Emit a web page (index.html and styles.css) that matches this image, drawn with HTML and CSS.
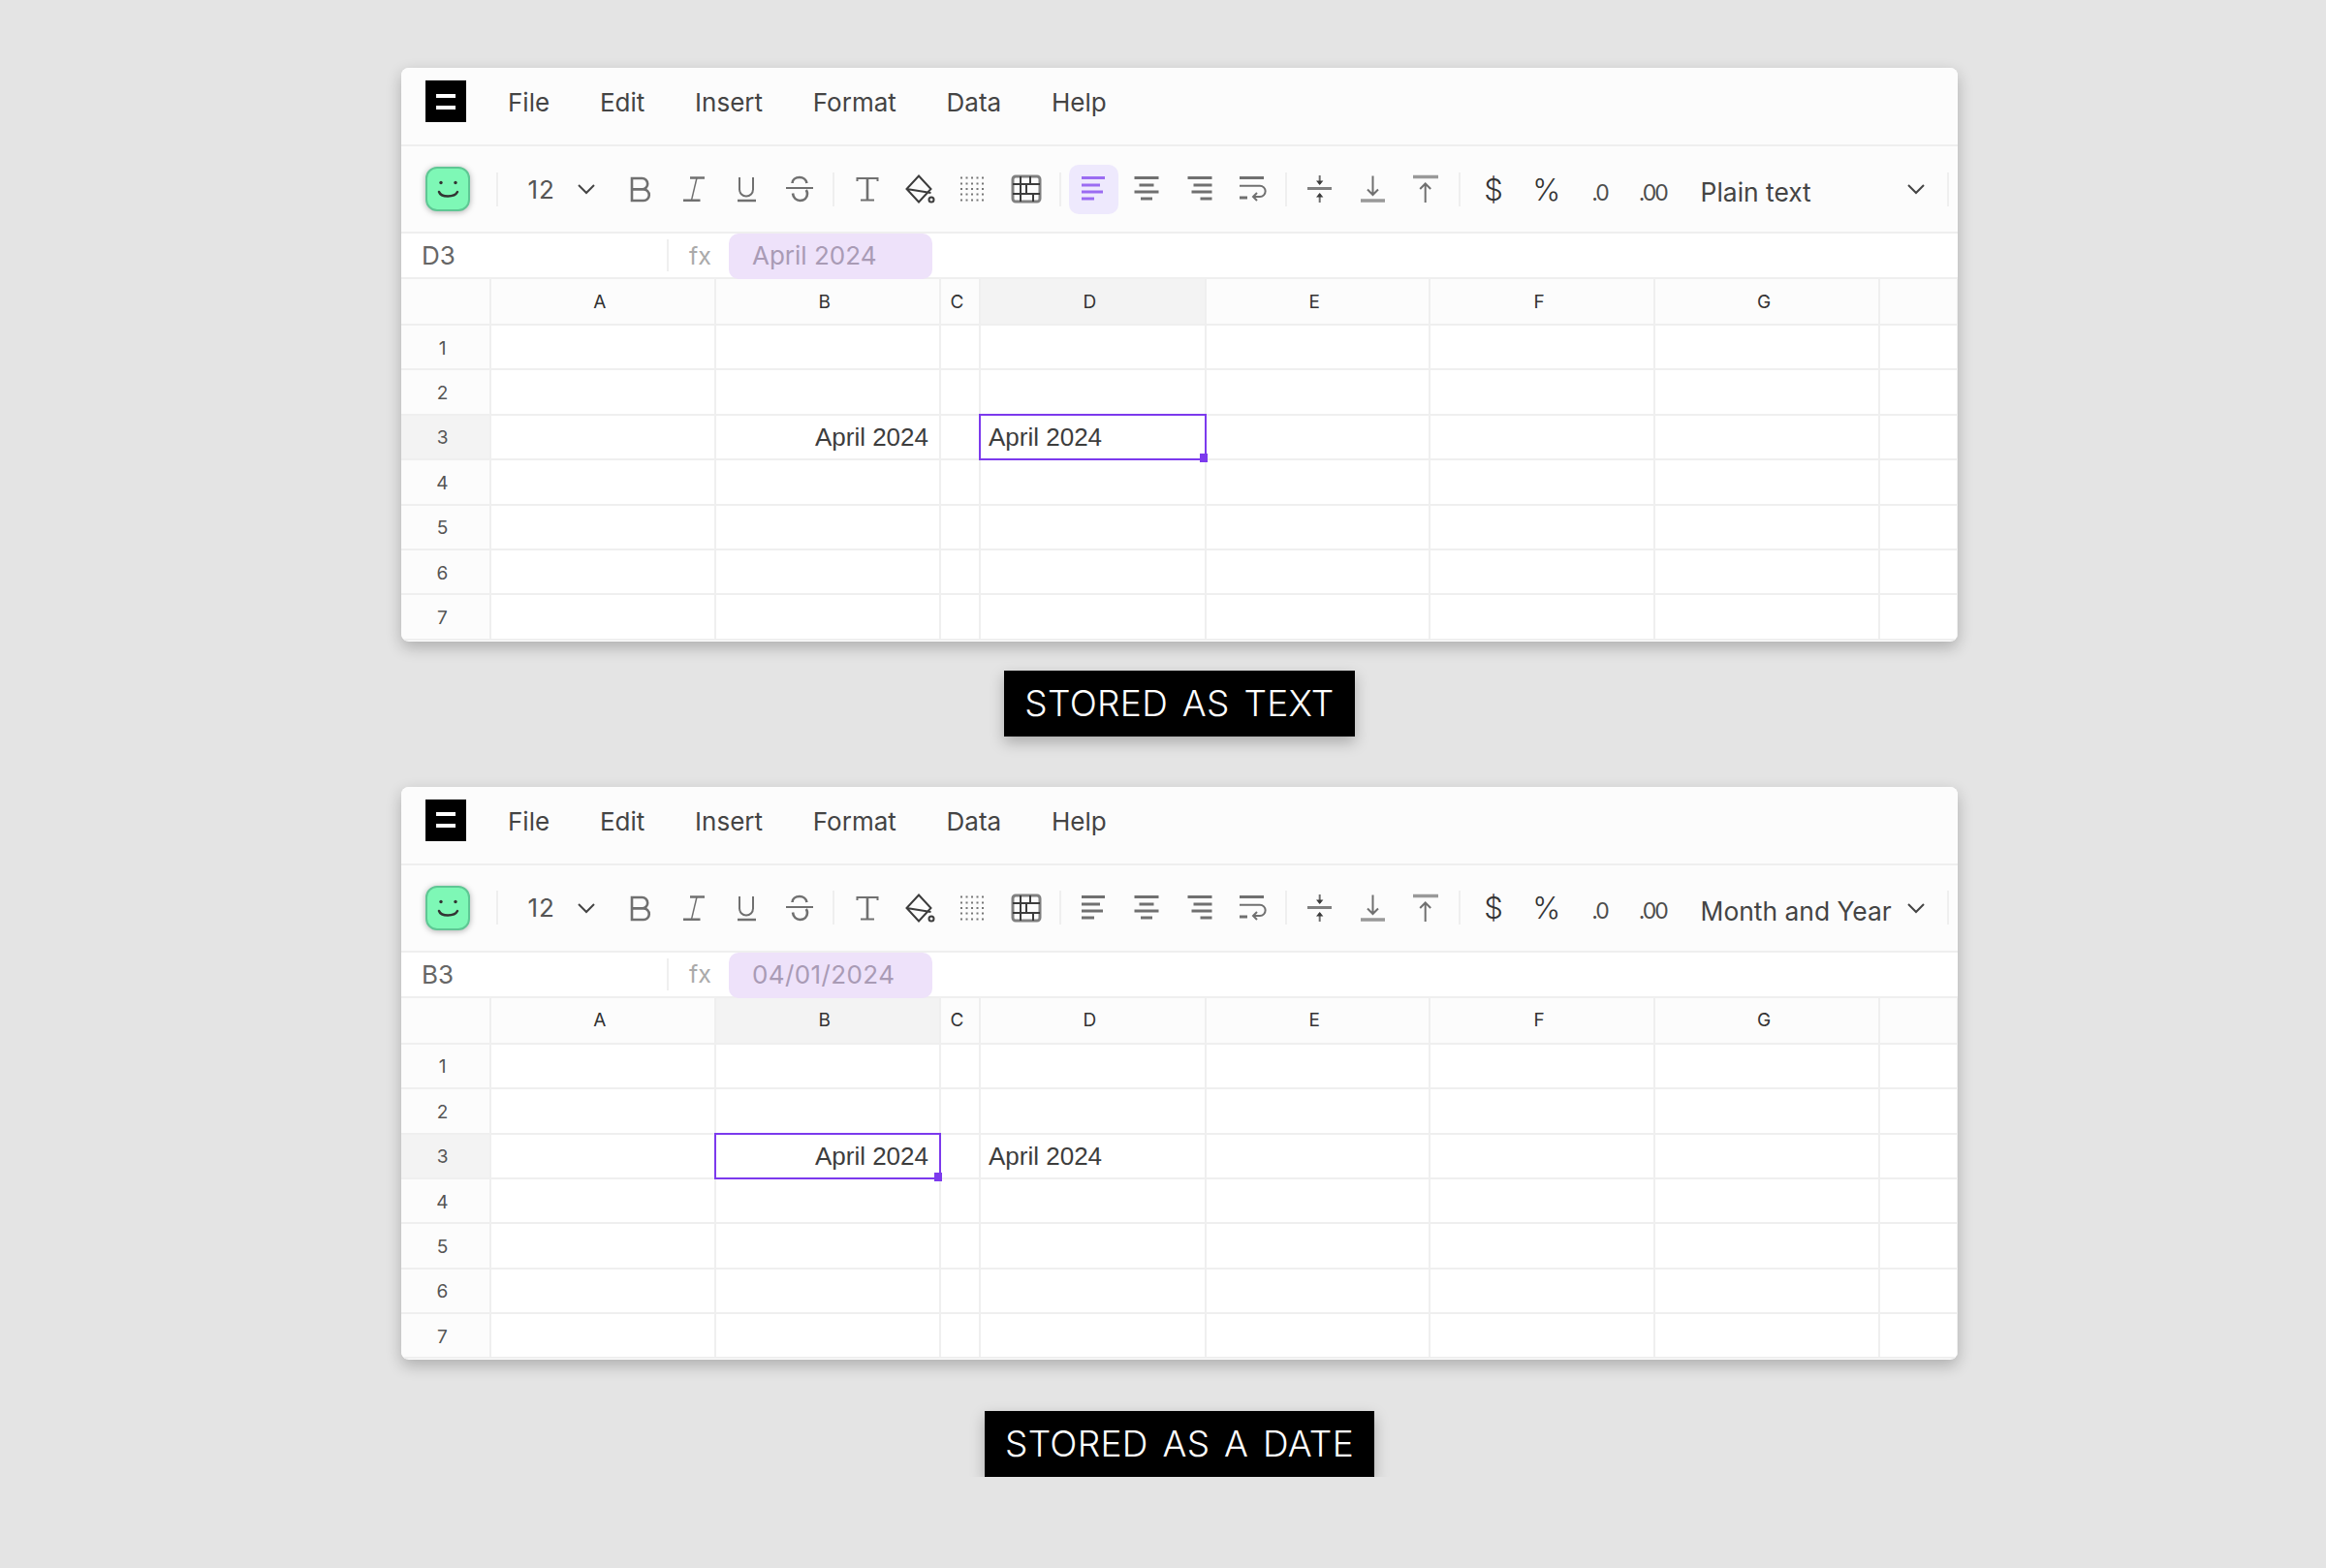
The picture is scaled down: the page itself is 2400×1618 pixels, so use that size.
FILE: index.html
```html
<!DOCTYPE html>
<html lang="en">
<head>
  <meta charset="UTF-8" />
  <title>Stored as text vs stored as a date</title>
  <link rel="stylesheet" href="styles.css">
</head>
<body>
  <svg class="sprite" xmlns="http://www.w3.org/2000/svg">
    <symbol id="i-chevron" viewBox="0 0 20 12"><path d="M2 2l8 8 8-8"/></symbol>
    <symbol id="i-bold" viewBox="0 0 32 32"><path class="thick" d="M7 5h10.500a5.700 5.700 0 0 1 0 11.400H7zM7 16.400h12a5.800 5.800 0 0 1 0 11.600H7z"/></symbol>
    <symbol id="i-italic" viewBox="0 0 32 32"><path class="thick" d="M12 4.500h15M5 27.700h17.500"/><path class="thin" d="M19 4.500l-5.500 23.200"/></symbol>
    <symbol id="i-underline" viewBox="0 0 32 32"><path d="M9 4v12.500a7 7 0 0 0 14 0V4"/><path class="thick" d="M7 28h19"/></symbol>
    <symbol id="i-strike" viewBox="0 0 32 32"><path class="thick" d="M23.500 10c-.5-3.500-3.700-6-7.500-6-4.300 0-7.500 2.500-7.500 6M9 20.500c.5 4.500 3.500 7.500 7.500 7.500 4.300 0 7.500-2.800 7.500-7 0-1.500-.5-2.800-1.200-4"/><path d="M2 15h28"/></symbol>
    <symbol id="i-text" viewBox="0 0 32 32"><path d="M5.500 8V5h21v3M9 27.500h14"/><path class="thick" d="M16 5v22"/></symbol>
    <symbol id="i-bucket" viewBox="0 0 32 32"><path class="dark" d="M15 2.500L27.500 16 15 29.500 2.500 16zM2.500 16l25 4"/><circle class="dark" cx="28" cy="27" r="2.500"/></symbol>
    <symbol id="i-borders" viewBox="0 0 32 32"><path class="dots" d="M3 4.500h26M3 10.500h26M3 16h26M3 21.500h26M3 27.500h26"/></symbol>
    <symbol id="i-grid" viewBox="0 0 32 32"><rect class="heavy" x="2" y="3" width="28" height="26" rx="3"/><path class="dark" d="M2 11h28M2 21h28M10 3v26M20 3v8M16 11v10M23 21v8"/></symbol>
    <symbol id="i-left" viewBox="0 0 32 32"><path class="bars" d="M4 4.500h24M4 12h19M4 19h22M4 26h13"/></symbol>
    <symbol id="i-center" viewBox="0 0 32 32"><path class="bars" d="M3.500 4.500h25M8.500 12h15M3.500 19h25M10 26h12"/></symbol>
    <symbol id="i-right" viewBox="0 0 32 32"><path class="bars" d="M3.500 4.500h25M9.500 12h19M7.500 19h21M16.500 26h12"/></symbol>
    <symbol id="i-wrap" viewBox="0 0 32 32"><path class="bars" d="M3 4.500h25M3 25h8"/><path d="M3 12.700h21a5.500 5.500 0 0 1 0 11.300h-6"/><path d="M21 20l-4 4 4 4"/></symbol>
    <symbol id="i-vmiddle" viewBox="0 0 32 32"><path class="heavy" d="M3 15.500h25"/><path d="M15.700 2v9M15.700 21v9"/><path class="solid" d="M12 7.500h7.400l-3.700 4.500zM12 24.500h7.400l-3.700-4.500z"/></symbol>
    <symbol id="i-vbottom" viewBox="0 0 32 32"><path class="bar3" d="M3 28h25"/><path d="M15.500 2.500v19M10 16.500l5.500 5.500 5.500-5.500"/></symbol>
    <symbol id="i-vtop" viewBox="0 0 32 32"><path class="bar3" d="M3 3.500h26"/><path d="M15.700 30V11M10.200 16l5.500-5.500 5.500 5.500"/></symbol>
  </svg>

  <main class="page">
    <section class="sheet">
      <div class="menu">
        <div class="logo"><span></span><span></span></div>
        <nav class="menu-items"><span>File</span><span>Edit</span><span>Insert</span><span>Format</span><span>Data</span><span>Help</span></nav>
      </div>
      <div class="toolbar">
        <svg class="smiley" viewBox="0 0 46 46"><rect x="1" y="1" width="44" height="44" rx="11"/><circle cx="16" cy="16.500" r="1.700"/><circle cx="31" cy="16.500" r="1.700"/><path d="M14 26c2 6 16 6 19 0"/></svg>
        <i class="sep"></i>
        <div class="size"><span>12</span><svg class="chev"><use href="#i-chevron"/></svg></div>
        <div class="btn"><svg class="ico"><use href="#i-bold"/></svg></div>
        <div class="btn"><svg class="ico"><use href="#i-italic"/></svg></div>
        <div class="btn"><svg class="ico"><use href="#i-underline"/></svg></div>
        <div class="btn"><svg class="ico"><use href="#i-strike"/></svg></div>
        <i class="sep"></i>
        <div class="btn"><svg class="ico"><use href="#i-text"/></svg></div>
        <div class="btn"><svg class="ico"><use href="#i-bucket"/></svg></div>
        <div class="btn"><svg class="ico"><use href="#i-borders"/></svg></div>
        <div class="btn"><svg class="ico"><use href="#i-grid"/></svg></div>
        <i class="sep"></i>
        <div class="btn active"><svg class="ico"><use href="#i-left"/></svg></div>
        <div class="btn"><svg class="ico"><use href="#i-center"/></svg></div>
        <div class="btn"><svg class="ico"><use href="#i-right"/></svg></div>
        <div class="btn"><svg class="ico"><use href="#i-wrap"/></svg></div>
        <i class="sep"></i>
        <div class="btn"><svg class="ico"><use href="#i-vmiddle"/></svg></div>
        <div class="btn"><svg class="ico"><use href="#i-vbottom"/></svg></div>
        <div class="btn"><svg class="ico"><use href="#i-vtop"/></svg></div>
        <i class="sep"></i>
        <div class="btn glyph">$</div>
        <div class="btn glyph">%</div>
        <div class="btn decimal">.0</div>
        <div class="btn decimal">.00</div>
        <div class="format"><span>Plain text</span><svg class="chev"><use href="#i-chevron"/></svg></div>
        <i class="sep"></i>
      </div>
      <div class="formula">
        <div class="namebox">D3</div>
        <i class="sep"></i>
        <div class="fx">fx</div>
        <div class="pill">April 2024</div>
      </div>
      <div class="grid">
        <div class="row head"><div></div><div>A</div><div>B</div><div>C</div><div class="on">D</div><div>E</div><div>F</div><div>G</div><div></div></div>
        <div class="row"><div>1</div><div></div><div></div><div></div><div></div><div></div><div></div><div></div><div></div></div>
        <div class="row"><div>2</div><div></div><div></div><div></div><div></div><div></div><div></div><div></div><div></div></div>
        <div class="row"><div class="on">3</div><div></div><div class="num">April 2024</div><div></div><div class="txt picked">April 2024<b></b></div><div></div><div></div><div></div><div></div></div>
        <div class="row"><div>4</div><div></div><div></div><div></div><div></div><div></div><div></div><div></div><div></div></div>
        <div class="row"><div>5</div><div></div><div></div><div></div><div></div><div></div><div></div><div></div><div></div></div>
        <div class="row"><div>6</div><div></div><div></div><div></div><div></div><div></div><div></div><div></div><div></div></div>
        <div class="row"><div>7</div><div></div><div></div><div></div><div></div><div></div><div></div><div></div><div></div></div>
      </div>
    </section>
    <div class="label first">STORED AS TEXT</div>

    <section class="sheet">
      <div class="menu">
        <div class="logo"><span></span><span></span></div>
        <nav class="menu-items"><span>File</span><span>Edit</span><span>Insert</span><span>Format</span><span>Data</span><span>Help</span></nav>
      </div>
      <div class="toolbar">
        <svg class="smiley" viewBox="0 0 46 46"><rect x="1" y="1" width="44" height="44" rx="11"/><circle cx="16" cy="16.500" r="1.700"/><circle cx="31" cy="16.500" r="1.700"/><path d="M14 26c2 6 16 6 19 0"/></svg>
        <i class="sep"></i>
        <div class="size"><span>12</span><svg class="chev"><use href="#i-chevron"/></svg></div>
        <div class="btn"><svg class="ico"><use href="#i-bold"/></svg></div>
        <div class="btn"><svg class="ico"><use href="#i-italic"/></svg></div>
        <div class="btn"><svg class="ico"><use href="#i-underline"/></svg></div>
        <div class="btn"><svg class="ico"><use href="#i-strike"/></svg></div>
        <i class="sep"></i>
        <div class="btn"><svg class="ico"><use href="#i-text"/></svg></div>
        <div class="btn"><svg class="ico"><use href="#i-bucket"/></svg></div>
        <div class="btn"><svg class="ico"><use href="#i-borders"/></svg></div>
        <div class="btn"><svg class="ico"><use href="#i-grid"/></svg></div>
        <i class="sep"></i>
        <div class="btn"><svg class="ico"><use href="#i-left"/></svg></div>
        <div class="btn"><svg class="ico"><use href="#i-center"/></svg></div>
        <div class="btn"><svg class="ico"><use href="#i-right"/></svg></div>
        <div class="btn"><svg class="ico"><use href="#i-wrap"/></svg></div>
        <i class="sep"></i>
        <div class="btn"><svg class="ico"><use href="#i-vmiddle"/></svg></div>
        <div class="btn"><svg class="ico"><use href="#i-vbottom"/></svg></div>
        <div class="btn"><svg class="ico"><use href="#i-vtop"/></svg></div>
        <i class="sep"></i>
        <div class="btn glyph">$</div>
        <div class="btn glyph">%</div>
        <div class="btn decimal">.0</div>
        <div class="btn decimal">.00</div>
        <div class="format"><span>Month and Year</span><svg class="chev"><use href="#i-chevron"/></svg></div>
        <i class="sep"></i>
      </div>
      <div class="formula">
        <div class="namebox">B3</div>
        <i class="sep"></i>
        <div class="fx">fx</div>
        <div class="pill date">04/01/2024</div>
      </div>
      <div class="grid">
        <div class="row head"><div></div><div>A</div><div class="on">B</div><div>C</div><div>D</div><div>E</div><div>F</div><div>G</div><div></div></div>
        <div class="row"><div>1</div><div></div><div></div><div></div><div></div><div></div><div></div><div></div><div></div></div>
        <div class="row"><div>2</div><div></div><div></div><div></div><div></div><div></div><div></div><div></div><div></div></div>
        <div class="row"><div class="on">3</div><div></div><div class="num picked">April 2024<b></b></div><div></div><div class="txt">April 2024</div><div></div><div></div><div></div><div></div></div>
        <div class="row"><div>4</div><div></div><div></div><div></div><div></div><div></div><div></div><div></div><div></div></div>
        <div class="row"><div>5</div><div></div><div></div><div></div><div></div><div></div><div></div><div></div><div></div></div>
        <div class="row"><div>6</div><div></div><div></div><div></div><div></div><div></div><div></div><div></div><div></div></div>
        <div class="row"><div>7</div><div></div><div></div><div></div><div></div><div></div><div></div><div></div><div></div></div>
      </div>
    </section>
    <div class="label">STORED AS A DATE</div>
  </main>
</body>
</html>
```

FILE: styles.css
```css
:root {
  --bg: #e4e4e4;
  --panel: #fcfcfc;
  --line: #efefef;
  --text: #444;
  --icon: #707070;
  --purple: #7c3aed;
}

* {
  box-sizing: border-box;
}

body {
  margin: 0;
  background-color: var(--bg);
  font-family: Inter, "Liberation Sans", sans-serif;
  color: var(--text);
}

.sprite {
  position: absolute;
  width: 0;
  height: 0;
}

.page {
  width: 1606px;
  margin-left: 414px;
  padding-top: 70px;
  display: flex;
  flex-direction: column;
  align-items: center;
}

.sheet {
  width: 100%;
  background-color: #fff;
  border-radius: 8px;
  overflow: hidden;
  box-shadow: 0 6px 16px rgba(0, 0, 0, 0.24);
  padding-bottom: 1px;
}

/* menu bar */
.menu {
  height: 81px;
  padding: 13px 0 0 25px;
  display: flex;
  align-items: flex-start;
  background-color: var(--panel);
  border-bottom: 2px solid var(--line);
}

.logo {
  width: 42px;
  height: 43px;
  margin-right: 43px;
  background-color: #000;
  display: flex;
  flex-direction: column;
  align-items: center;
  justify-content: center;
  gap: 8px;
}

.logo span {
  width: 20px;
  height: 4px;
  background-color: #fff;
}

.menu-items {
  display: flex;
  gap: 51.800px;
  font-size: 26px;
  line-height: 45px;
}

/* toolbar */
.toolbar {
  height: 90px;
  padding: 0 3px 0 25px;
  display: flex;
  align-items: center;
  background-color: var(--panel);
  border-bottom: 2px solid var(--line);
}

.smiley {
  width: 46px;
  height: 46px;
  margin-right: 20.500px;
  filter: drop-shadow(0 1px 3px rgba(0, 0, 0, 0.3));
}

.smiley rect {
  fill: #7ef8b6;
  stroke: #5fc794;
  stroke-width: 2;
}

.smiley circle {
  fill: #333;
}

.smiley path {
  fill: none;
  stroke: #333;
  stroke-width: 2.500;
  stroke-linecap: round;
}

.sep {
  flex: none;
  width: 2px;
  height: 35px;
  margin: 0 6.500px;
  background-color: var(--line);
}

.size {
  width: 113px;
  padding-left: 24px;
  display: flex;
  align-items: center;
  gap: 22.500px;
  font-size: 26px;
  letter-spacing: 1px;
  color: #555;
}

.chev {
  flex: none;
  width: 20px;
  height: 12px;
  fill: none;
  stroke: #444;
  stroke-width: 2;
}

.btn {
  flex: none;
  width: 51px;
  height: 51px;
  margin: 0 1.850px;
  border-radius: 10px;
  display: flex;
  align-items: center;
  justify-content: center;
  color: var(--icon);
}

.btn.active {
  background-color: #eee9fd;
  color: #9b6cf2;
}

.ico {
  width: 32px;
  height: 32px;
  fill: none;
  stroke: currentColor;
  stroke-width: 2;
}

/* these sit in the symbols, not under .ico */
.thin {
  stroke-width: 1.500;
}

.thick {
  stroke-width: 2.600;
}

.heavy {
  stroke-width: 3;
  stroke: #808080;
}

.bars {
  stroke-width: 2.800;
}

.bar3 {
  stroke-width: 3.500;
  stroke: #999;
}

.dark {
  stroke: #3c3c3c;
}

.solid {
  fill: #3c3c3c;
  stroke: none;
}

.dots {
  stroke-width: 2.200;
  stroke-dasharray: 2 3.500;
  stroke: #777;
}

.glyph {
  font-size: 31px;
  font-weight: 300;
  color: #333;
}

.decimal {
  padding-top: 7px;
  font-size: 23px;
  letter-spacing: -2px;
  color: #4d4d4d;
}

.format {
  flex: 1;
  padding: 6px 15px 0 22px;
  display: flex;
  align-items: center;
  justify-content: space-between;
  font-size: 26.400px;
}

.format .chev {
  margin-top: -6px;
}

/* formula bar */
.formula {
  height: 47px;
  display: flex;
  align-items: center;
  background-color: #fff;
  border-bottom: 2px solid var(--line);
}

.namebox {
  width: 268px;
  padding-left: 21px;
  font-size: 26px;
  color: #666;
}

.formula .sep {
  height: 33px;
  margin: 0 6px;
}

.fx {
  width: 47px;
  padding-left: 15px;
  font-size: 25px;
  color: #aaa;
}

.pill {
  width: 210px;
  height: 47px;
  margin-left: 9px;
  padding-left: 24px;
  align-self: flex-start;
  border-radius: 10px;
  background-color: #eee2fa;
  font-size: 26px;
  line-height: 46px;
  color: #a99bb5;
}

.pill.date {
  letter-spacing: 0.400px;
}

/* cells */
.row {
  height: 46.400px;
  display: grid;
  grid-template-columns: 93px 231.500px 232.500px 41px 232.500px 231.500px 232px 232px 80.500px;
  font-family: "Liberation Sans", Arial, sans-serif;
  font-size: 26px;
  color: #3d3d3d;
}

.row > div {
  position: relative;
  display: flex;
  align-items: center;
  padding-top: 2px;
  border-right: 2px solid var(--line);
  border-bottom: 2px solid var(--line);
}

.row > div:first-child,
.head > div {
  justify-content: center;
  padding-right: 6px;
  background-color: var(--panel);
  font-family: Inter, sans-serif;
  font-size: 19px;
  color: #555;
}

.row > div.on {
  background-color: #f3f3f3;
}

.head {
  height: 48px;
}

.head > div {
  padding-top: 0;
  color: #333;
}

.num {
  justify-content: flex-end;
  padding-right: 11px;
}

.txt {
  padding-left: 8px;
}

.picked::after {
  content: "";
  position: absolute;
  inset: -2px -2px -2px -2px;
  border: 2px solid var(--purple);
}

.picked b {
  position: absolute;
  right: -3px;
  bottom: -4px;
  z-index: 1;
  width: 8px;
  height: 9px;
  background-color: var(--purple);
}

/* captions */
.label {
  height: 68px;
  margin-top: 53px;
  padding: 0 21px;
  background-color: #000;
  box-shadow: 0 6px 14px rgba(0, 0, 0, 0.25);
  font-size: 37px;
  font-weight: 300;
  line-height: 67px;
  letter-spacing: 0.300px;
  word-spacing: 4px;
  color: #fff;
}

.label.first {
  margin: 30px 0 52px;
}
```
